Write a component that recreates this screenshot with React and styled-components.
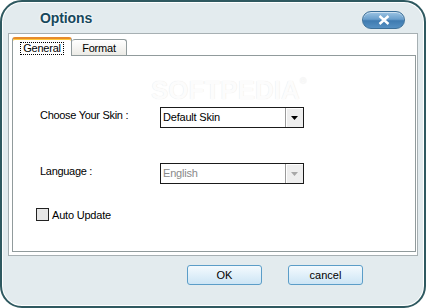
import React from 'react';
import styled, { createGlobalStyle } from 'styled-components';

const GlobalStyle = createGlobalStyle`
  html, body {
    margin: 0;
    padding: 0;
    background: #ffffff;
  }
  body {
    font-family: "Liberation Sans", Arial, sans-serif;
    font-size: 11px;
    color: #000;
  }
`;

const Window = styled.div`
  position: relative;
  box-sizing: border-box;
  width: 426px;
  height: 308px;
  display: flex;
  flex-direction: column;
  background: #e3ebee;
  border: 2px solid #2f5960;
  border-radius: 22px;
  box-shadow: inset 0 0 0 1px #ffffff;
  overflow: hidden;
`;

const TitleBar = styled.div`
  height: 31px;
  display: flex;
  align-items: center;
  justify-content: space-between;
  padding: 0 19px 0 38px;
`;

const Title = styled.h1`
  margin: 0;
  font-size: 14px;
  font-weight: bold;
  color: #17485c;
  letter-spacing: -0.1px;
  text-shadow: 0 0 3px #ffffff, 0 0 2px #ffffff;
`;

const CloseButton = styled.button`
  box-sizing: border-box;
  width: 43px;
  height: 18px;
  margin-top: 5px;
  padding: 0;
  display: flex;
  align-items: center;
  justify-content: center;
  border: 1px solid #3c6f98;
  border-radius: 9px;
  background: linear-gradient(#9cc4e4 0%, #6a9fcc 45%, #3f7bb0 55%, #5590c2 100%);
  box-shadow: inset 0 1px 0 rgba(255, 255, 255, 0.5);
`;

const Frame = styled.div`
  box-sizing: border-box;
  height: 223px;
  margin: 0 6px;
  padding: 3px 1px 3px 3px;
  display: flex;
  flex-direction: column;
  background: #ffffff;
  border: 1px solid #a7b0b3;
`;

const TabList = styled.div`
  display: flex;
  align-items: flex-end;
  height: 18px;
  position: relative;
  z-index: 1;
`;

const Tab = styled.div`
  box-sizing: border-box;
  position: relative;
  width: ${(p) => p.$width}px;
  display: flex;
  justify-content: center;
  border: 1px solid #919b9c;
  border-bottom: none;
  border-radius: 3px 3px 0 0;
  ${(p) =>
    p.$active
      ? `
    height: 19px;
    margin-bottom: -1px;
    background: #ffffff;
    border-top: 2px solid #e68b2c;
    box-shadow: inset 0 1px 0 #ffc73c;
    padding-top: 3px;
  `
      : `
    height: 16px;
    background: linear-gradient(#ffffff, #ecebe6);
    padding-top: 2px;
    border-left: none;
  `}
`;

const TabLabel = styled.span`
  box-sizing: border-box;
  height: 13px;
  line-height: 11px;
  padding: 0 2px;
  letter-spacing: -0.2px;
  border: 1px dotted ${(p) => (p.$focused ? '#000' : 'transparent')};
`;

const Panel = styled.div`
  box-sizing: border-box;
  position: relative;
  flex: 1;
  padding: 51px 0 0 23px;
  background: #ffffff;
  border: 1px solid #919b9c;
  overflow: hidden;
`;

const Watermark = styled.div`
  position: absolute;
  left: 138px;
  top: 21px;
  font-size: 26px;
  line-height: 26px;
  font-weight: bold;
  color: #fcfcfc;
  text-shadow: 0 0 1px #e2e2e2;
  pointer-events: none;
  sup {
    font-size: 9px;
    line-height: 9px;
    vertical-align: top;
  }
`;

const FieldGrid = styled.div`
  display: grid;
  grid-template-columns: 120px 144px;
  row-gap: 35px;
  margin-left: 4px;
  position: relative;
`;

const Label = styled.label`
  padding-top: 2px;
  letter-spacing: -0.3px;
`;

const Select = styled.div`
  box-sizing: border-box;
  height: 21px;
  display: flex;
  border: 1px solid #1a1a1a;
  background: #ffffff;
  color: ${(p) => (p.$disabled ? '#8a8a8a' : '#000')};
`;

const SelectValue = styled.span`
  flex: 1;
  padding-left: 2px;
  line-height: 19px;
  letter-spacing: -0.2px;
`;

const ArrowBox = styled.span`
  box-sizing: border-box;
  width: 18px;
  display: flex;
  align-items: center;
  justify-content: center;
  background: #eeeeee;
  border-left: 1px solid #9a9a9a;
  box-shadow: inset 1px 1px 0 #ffffff;
`;

const CheckRow = styled.div`
  display: flex;
  align-items: center;
  gap: 3px;
  margin-top: 24px;
  position: relative;
`;

const CheckBox = styled.span`
  box-sizing: border-box;
  width: 13px;
  height: 13px;
  background: #e6e6e6;
  border: 1px solid #222;
`;

const CheckText = styled.span`
  letter-spacing: -0.2px;
`;

const ButtonRow = styled.div`
  display: flex;
  justify-content: flex-end;
  gap: 26px;
  padding: 9px 61px 0 0;
`;

const Button = styled.button`
  box-sizing: border-box;
  width: 75px;
  height: 20px;
  padding: 0;
  font-family: "Liberation Sans", Arial, sans-serif;
  font-size: 11px;
  color: #000;
  border: 1px solid #5b9dc8;
  border-radius: 3px;
  background: linear-gradient(#f4fafe, #cde5f5);
`;

function Arrow({ color }) {
  return (
    <svg width="7" height="4" viewBox="0 0 7 4">
      <path d="M0 0H7L3.5 4Z" fill={color} />
    </svg>
  );
}

function Dropdown({ value, disabled }) {
  return (
    <Select $disabled={disabled}>
      <SelectValue>{value}</SelectValue>
      <ArrowBox>
        <Arrow color={disabled ? '#a8a8a8' : '#000'} />
      </ArrowBox>
    </Select>
  );
}

export default function App() {
  return (
    <>
      <GlobalStyle />
      <Window>
        <TitleBar>
          <Title>Options</Title>
          <CloseButton aria-label="close">
            <svg width="12" height="10" viewBox="0 0 12 10">
              <path d="M1.5 1L10.5 9M10.5 1L1.5 9" stroke="#fff" strokeWidth="2.4" />
            </svg>
          </CloseButton>
        </TitleBar>
        <Frame>
          <TabList>
            <Tab $active $width={60}>
              <TabLabel $focused>General</TabLabel>
            </Tab>
            <Tab $width={55}>
              <TabLabel>Format</TabLabel>
            </Tab>
          </TabList>
          <Panel>
            <Watermark>
              SOFTPEDIA<sup>®</sup>
            </Watermark>
            <FieldGrid>
              <Label>Choose Your Skin :</Label>
              <Dropdown value="Default Skin" />
              <Label>Language :</Label>
              <Dropdown value="English" disabled />
            </FieldGrid>
            <CheckRow>
              <CheckBox />
              <CheckText>Auto Update</CheckText>
            </CheckRow>
          </Panel>
        </Frame>
        <ButtonRow>
          <Button>OK</Button>
          <Button>cancel</Button>
        </ButtonRow>
      </Window>
    </>
  );
}
